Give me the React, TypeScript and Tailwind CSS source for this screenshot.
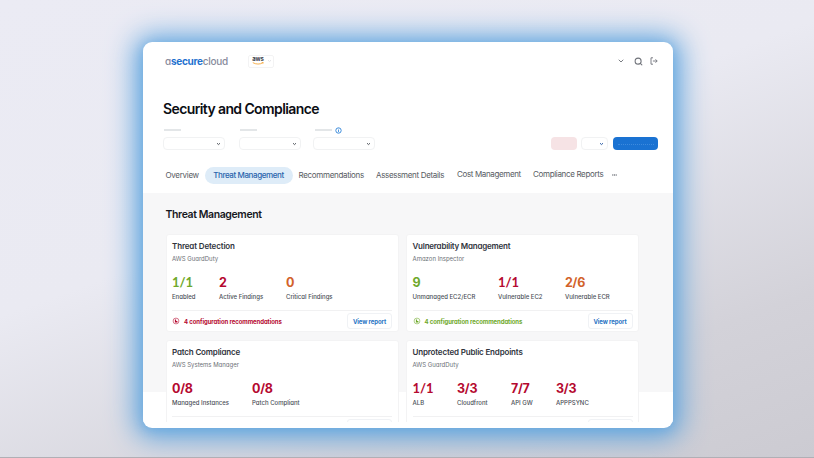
import { ChevronDown, Search } from "lucide-react";

type Stat = { value: string; label: string; color: string; width: string };
type CardData = {
  title: string;
  titleTracking: string;
  subtitle: string;
  stats: Stat[];
  tone: string;
  recommendations?: string;
};

const GREEN = "text-[#6fa92b]";
const RED = "text-[#b5092f]";
const ORANGE = "text-[#d2622a]";

const cards: CardData[] = [
  {
    title: "Threat Detection",
    titleTracking: "tracking-[-0.14px]",
    subtitle: "AWS GuardDuty",
    tone: RED,
    recommendations: "4 configuration recommendations",
    stats: [
      { value: "1/1", label: "Enabled", color: GREEN, width: "w-[47px]" },
      { value: "2", label: "Active Findings", color: RED, width: "w-[67px]" },
      { value: "0", label: "Critical Findings", color: ORANGE, width: "w-[80px]" },
    ],
  },
  {
    title: "Vulnerability Management",
    titleTracking: "tracking-[-0.22px]",
    subtitle: "Amazon Inspector",
    tone: GREEN,
    recommendations: "4 configuration recommendations",
    stats: [
      { value: "9", label: "Unmanaged EC2/ECR", color: GREEN, width: "w-[85.5px]" },
      { value: "1/1", label: "Vulnerable EC2", color: RED, width: "w-[67px]" },
      { value: "2/6", label: "Vulnerable ECR", color: ORANGE, width: "w-[70px]" },
    ],
  },
  {
    title: "Patch Compliance",
    titleTracking: "tracking-[-0.17px]",
    subtitle: "AWS Systems Manager",
    tone: RED,
    stats: [
      { value: "0/8", label: "Managed Instances", color: RED, width: "w-[80px]" },
      { value: "0/8", label: "Patch Compliant", color: RED, width: "w-[80px]" },
    ],
  },
  {
    title: "Unprotected Public Endpoints",
    titleTracking: "tracking-[-0.17px]",
    subtitle: "AWS GuardDuty",
    tone: RED,
    stats: [
      { value: "1/1", label: "ALB", color: RED, width: "w-[44.5px]" },
      { value: "3/3", label: "Cloudfront", color: RED, width: "w-[54px]" },
      { value: "7/7", label: "API GW", color: RED, width: "w-[45px]" },
      { value: "3/3", label: "APPPSYNC", color: RED, width: "w-[60px]" },
    ],
  },
];

function Caret({ className = "" }: { className?: string }) {
  return (
    <svg className={className} width="5" height="4" viewBox="0 0 5 4" fill="none">
      <path d="M1 1.2 2.5 2.6 4 1.2" stroke="currentColor" strokeWidth="1" />
    </svg>
  );
}

function Filter({ info = false }: { info?: boolean }) {
  return (
    <div className="w-[62px]">
      <div className="flex h-[8px] items-center">
        <div className={`h-[1.5px] w-[17px] bg-[#e3e6e8] ${info ? "ml-[2px]" : "ml-[1px]"}`} />
        {info && (
          <svg className="ml-[3px]" width="7" height="7" viewBox="0 0 7 7" fill="none">
            <circle cx="3.5" cy="3.5" r="2.7" stroke="#3f8ddb" strokeWidth="1" />
            <path d="M3.5 3v2.1M3.5 1.8v.7" stroke="#3f8ddb" strokeWidth=".9" />
          </svg>
        )}
      </div>
      <div className="mt-[3px] flex h-[13px] items-center justify-end rounded-[4px] border border-[#f1f2f3] bg-white pr-[3px]">
        <Caret className="text-[#555a61]" />
      </div>
    </div>
  );
}

function AwsLogo() {
  return (
    <div className="flex w-[12px] flex-col items-center">
      <span className="h-[5px] text-[6px] leading-[4px] font-bold tracking-[-0.2px] text-[#3c424c]">aws</span>
      <svg width="12" height="3" viewBox="0 0 12 3" fill="none">
        <path d="M.8.6C4 2.5 8 2.5 10.6.8M9.8.4h1.4l-.3 1.3" stroke="#f6a83c" strokeWidth=".9" />
      </svg>
    </div>
  );
}

function Card({ data }: { data: CardData }) {
  return (
    <section className="h-[98px] w-[233px] rounded-[3px] border border-[#f3f3f4] bg-white px-[5.5px] pt-[5px]">
      <h3
        className={`h-[12px] text-[8px] leading-[12px] font-semibold whitespace-nowrap text-[#30343d] [font-feature-settings:'cv11'] ${data.titleTracking}`}
      >
        {data.title}
      </h3>
      <p className="mt-[1.5px] h-[10px] text-[6px] leading-[10px] whitespace-nowrap text-[#6c7076] [font-feature-settings:'cv11']">
        {data.subtitle}
      </p>
      <div className="mt-[12.5px] flex">
        {data.stats.map((s) => (
          <div key={s.label} className={`shrink-0 ${s.width}`}>
            <div
              className={`h-[13px] leading-[13px] font-bold ${s.color} ${
                s.value === "1/1" ? "font-[Lato,sans-serif] text-[13px]" : "text-[12.5px] tracking-[-0.25px]"
              }`}
            >
              {s.value}
            </div>
            <div className="mt-[3.5px] h-[8px] text-[6px] leading-[8px] font-medium whitespace-nowrap text-[#4b4f57] [font-feature-settings:'cv11']">
              {s.label}
            </div>
          </div>
        ))}
      </div>
      <div className="mt-[9px] h-px bg-[#f1f1f2]" />
      <div className="mt-[2.5px] flex h-[16px] items-center">
        {data.recommendations && (
          <>
            <svg className={data.tone} width="8" height="8" viewBox="0 0 8 8" fill="none">
              <circle cx="4" cy="4" r="2.9" stroke="currentColor" strokeWidth=".8" opacity=".7" />
              <path d="M2.9 2.6v2.8h2.5V3.9H4.1V2.6z" fill="currentColor" />
            </svg>
            <span
              className={`mt-[1.5px] ml-[4px] text-[6px] leading-[8px] font-bold tracking-[-0.08px] whitespace-nowrap [font-feature-settings:'cv11'] ${data.tone}`}
            >
              {data.recommendations}
            </span>
          </>
        )}
        <span className="ml-auto flex h-[16px] w-[45px] items-center justify-center rounded-[3px] border border-[#f0f2f5] text-[6px] font-bold tracking-[-0.1px] whitespace-nowrap text-[#2673c4]">
          {data.recommendations && "View report"}
        </span>
      </div>
    </section>
  );
}

export default function App() {
  return (
    <div className="h-[458px] w-[814px] overflow-hidden border-b border-[#b0afb5] bg-[linear-gradient(160deg,#ebebf4_0%,#eaeaf2_42%,#d3d2d9_78%,#cccbd2_100%)] pt-[42px] pl-[143px] font-[Inter,sans-serif]">
      <main className="h-[385.5px] w-[530px] overflow-hidden rounded-[9px] bg-white shadow-[0_2px_8px_1px_#67a9e177,0_2px_28px_8px_#5fa5df]">
        <header className="flex h-[38px] items-center pr-[15px] pl-[22px]">
          <div className="w-[83px] text-[10px] leading-[12px] font-medium tracking-[-0.28px] whitespace-nowrap text-[#878b9b] [font-feature-settings:'cv11']">
            a<span className="font-bold text-[#1f72cf]">secure</span>cloud
          </div>
          <div className="flex h-[13px] w-[26px] items-center gap-[3px] rounded-[2px] border border-[#f3f3f4] pl-[3px]">
            <AwsLogo />
            <Caret className="text-[#e2e2e5]" />
          </div>
          <div className="ml-auto flex items-center text-[#70737a]">
            <ChevronDown size={8} strokeWidth={2.8} />
            <Search className="ml-[9px]" size={9} strokeWidth={2.8} />
            <svg className="ml-[7px]" width="8" height="8" viewBox="0 0 8 8" fill="none" stroke="currentColor" strokeWidth=".9">
              <path d="M3 .8H1v6.4h2M2.9 4h4.2M5.5 2.3 7.2 4 5.5 5.7" />
            </svg>
          </div>
        </header>

        <h1 className="mt-[18px] ml-[20px] h-[22px] text-[14px] leading-[22px] font-semibold tracking-[-0.61px] whitespace-nowrap text-[#0b0d13]">
          Security and Compliance
        </h1>

        <div className="mt-[6px] flex items-end pr-[15px] pl-[20px]">
          <Filter />
          <div className="w-[14px]" />
          <Filter />
          <div className="w-[12px]" />
          <Filter info />
          <div className="ml-auto flex h-[13px] items-center">
            <div className="h-[13px] w-[26px] rounded-[4px] bg-[#f6e3e5]" />
            <div className="ml-[4px] flex h-[13px] w-[27px] items-center justify-end rounded-[4px] border border-[#f1f2f3] pr-[3px]">
              <Caret className="text-[#2d5da5]" />
            </div>
            <div className="ml-[5px] flex h-[13px] w-[45px] items-center justify-center rounded-[4px] bg-[#1a72d2]">
              <div className="h-[3px] w-[36px] border-b border-dotted border-[#3d8ade]" />
            </div>
          </div>
        </div>

        <nav className="mt-[16px] flex h-[18px] items-center pl-[22.5px] text-[8px] leading-[10px] whitespace-nowrap text-[#575b62]">
          <span className="w-[39px] tracking-[-0.3px]">Overview</span>
          <span className="flex h-[17px] w-[88px] items-center justify-center rounded-full bg-[#deecf8] font-medium tracking-[-0.4px] text-[#2863ac]">
            Threat Management
          </span>
          <span className="ml-[6px] w-[77.5px] tracking-[-0.32px]">Recommendations</span>
          <span className="w-[81px] tracking-[-0.33px]">Assessment Details</span>
          <span className="mb-[2px] w-[76px] tracking-[-0.36px]">Cost Management</span>
          <span className="mb-[2px] w-[79px] tracking-[-0.34px]">Compliance Reports</span>
          <svg width="5" height="2" viewBox="0 0 5 2" fill="#666a71">
            <circle cx=".8" cy="1" r=".65" />
            <circle cx="2.5" cy="1" r=".65" />
            <circle cx="4.2" cy="1" r=".65" />
          </svg>
        </nav>

        <div className="mt-[9px] h-[229px] overflow-hidden bg-[linear-gradient(#f7f7f8_0px,#f7f7f8_199px,#ffffff_199px)] pl-[22.5px]">
          <h2 className="mt-[14px] h-[16px] text-[10.5px] leading-[16px] font-semibold tracking-[-0.39px] whitespace-nowrap text-[#16181e]">
            Threat Management
          </h2>
          <div className="mt-[11px] grid h-[188px] w-[474px] grid-cols-[233px_233px] content-start gap-x-[7.5px] gap-y-[8px] overflow-hidden">
            {cards.map((c) => (
              <Card key={c.title} data={c} />
            ))}
          </div>
        </div>
      </main>
    </div>
  );
}
